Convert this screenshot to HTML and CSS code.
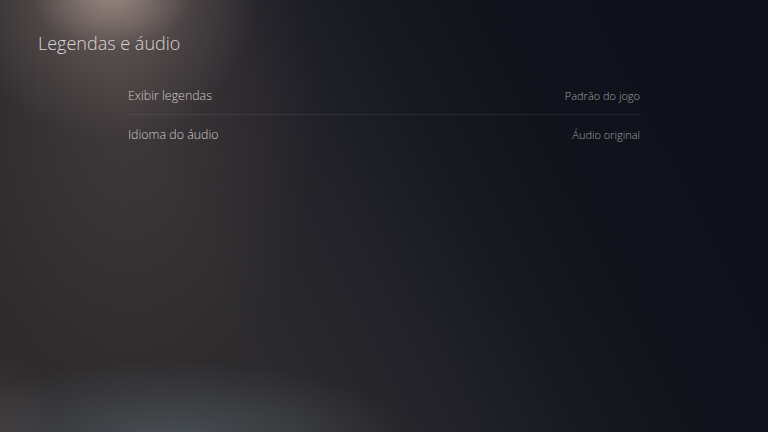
FILE: index.html
```html
<!DOCTYPE html>
<html lang="pt">
<head>
<meta charset="utf-8">
<title>Legendas e áudio</title>
<link rel="stylesheet" href="styles.css">
</head>
<body>
<main class="screen">
  <h1 class="title">Legendas e áudio</h1>
  <ul class="list">
    <li class="row"><span class="label">Exibir legendas</span><span class="value">Padrão do jogo</span></li>
    <li class="row"><span class="label">Idioma do áudio</span><span class="value">Áudio original</span></li>
  </ul>
</main>
</body>
</html>
```
FILE: styles.css
```css
html, body {
  margin: 0;
  padding: 0;
  width: 768px;
  height: 432px;
  overflow: hidden;
}
body {
  font-family: "Open Sans", "Liberation Sans", sans-serif;
  background-color: #10131b;
}
.screen {
  box-sizing: border-box;
  width: 768px;
  height: 432px;
  padding: 30px 128px 0 38px;
  background:
    radial-gradient(ellipse 80px 55px at 112px -4px, rgba(170,150,142,0.7), rgba(170,150,142,0) 100%),
    radial-gradient(ellipse 150px 150px at 110px -10px, rgba(135,118,112,0.6), rgba(135,118,112,0) 100%),
    radial-gradient(ellipse 190px 320px at 125px 110px, rgba(78,68,68,0.55), rgba(78,68,68,0) 100%),
    radial-gradient(ellipse 240px 80px at 170px 440px, rgba(82,92,98,0.75), rgba(82,92,98,0) 100%),
    radial-gradient(ellipse 60px 90px at 0px 432px, rgba(80,66,68,0.5), rgba(80,66,68,0) 100%),
    linear-gradient(63deg, #2c292b 0%, #2c2a2d 30%, #24232a 45%, #181a22 58%, #10131b 72%, #0e111a 100%);
}
.title {
  margin: 0;
  font-size: 18px;
  font-weight: 300;
  color: #d8d5d4;
  line-height: 26px;
}
.list {
  list-style: none;
  margin: 20px 0 0 90px;
  padding: 0;
}
.row {
  display: flex;
  justify-content: space-between;
  align-items: center;
  height: 38px;
}
.row + .row {
  border-top: 1px solid rgba(255,255,255,0.07);
}
.label {
  font-size: 12.4px;
  font-weight: 300;
  color: #cdcaca;
}
.value {
  font-size: 11px;
  font-weight: 300;
  color: #a2a2a6;
}
```
